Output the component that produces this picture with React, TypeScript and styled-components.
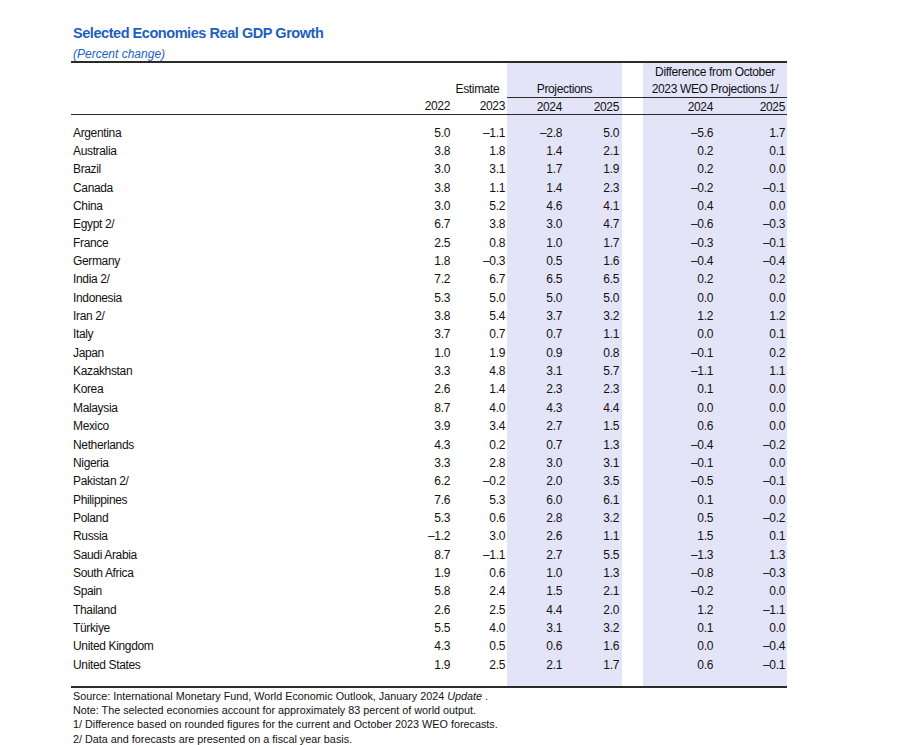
import React from "react";
import styled, { createGlobalStyle } from "styled-components";

const Global = createGlobalStyle`
  html, body { margin: 0; padding: 0; background: #ffffff; }
  body { font-family: "Liberation Sans", Arial, sans-serif; color: #000; }
`;

const SHADE = "#e4e4f9";

const Page = styled.div`
  width: 898px;
  height: 745px;
  box-sizing: border-box;
  padding: 24px 0 0 71px;
  overflow: hidden;
`;

const Frame = styled.div`
  width: 716px;
  display: flex;
  flex-direction: column;
`;

const Title = styled.h1`
  margin: 0 0 5px 2px;
  font-family: "Liberation Sans", Arial, sans-serif;
  font-weight: bold;
  font-size: 14.5px;
  letter-spacing: -0.45px;
  line-height: 18px;
  color: #1d5fbf;
`;

const Subtitle = styled.div`
  margin: 0 0 0 2px;
  font-family: "Liberation Sans", Arial, sans-serif;
  font-style: italic;
  font-size: 12px;
  line-height: 14px;
  color: #1d5fbf;
`;

const Table = styled.table`
  width: 716px;
  table-layout: fixed;
  border-collapse: collapse;
  border-top: 2px solid #2a2a2a;
  border-bottom: 2px solid #2a2a2a;
  font-family: "Liberation Sans Narrow", "Arial Narrow", "Liberation Sans", sans-serif;
  font-size: 12px;
  letter-spacing: -0.35px;
  color: #111;
`;

const Col = styled.col<{ $w: number }>`
  width: ${(p) => p.$w}px;
`;

const Row = styled.tr<{ $h: number; $rule?: boolean }>`
  height: ${(p) => p.$h}px;
  ${(p) => (p.$rule ? "border-bottom: 1px solid #2a2a2a;" : "")}
`;

const Cell = styled.td<{ $shade?: boolean; $align?: "left" | "right" | "center"; $pr?: number; $rule?: boolean; $pt?: number }>`
  padding: ${(p) => p.$pt ?? 0}px ${(p) => p.$pr ?? 0}px 0 ${(p) => (p.$align === "left" ? 2 : 0)}px;
  text-align: ${(p) => p.$align ?? "right"};
  background: ${(p) => (p.$shade ? SHADE : "transparent")};
  white-space: nowrap;
  line-height: 14px;
  vertical-align: middle;
  ${(p) => (p.$rule ? "border-bottom: 1px solid #2a2a2a;" : "")}
`;

const Footer = styled.div`
  margin: 1px 0 0 2px;
  font-family: "Liberation Sans", Arial, sans-serif;
  font-size: 10.8px;
  line-height: 14.3px;
  color: #111;
`;

const Em = styled.i`
  font-style: italic;
`;

type R = [string, string, string, string, string, string, string];

const rows: R[] = [
  ["Argentina", "5.0", "–1.1", "–2.8", "5.0", "–5.6", "1.7"],
  ["Australia", "3.8", "1.8", "1.4", "2.1", "0.2", "0.1"],
  ["Brazil", "3.0", "3.1", "1.7", "1.9", "0.2", "0.0"],
  ["Canada", "3.8", "1.1", "1.4", "2.3", "–0.2", "–0.1"],
  ["China", "3.0", "5.2", "4.6", "4.1", "0.4", "0.0"],
  ["Egypt 2/", "6.7", "3.8", "3.0", "4.7", "–0.6", "–0.3"],
  ["France", "2.5", "0.8", "1.0", "1.7", "–0.3", "–0.1"],
  ["Germany", "1.8", "–0.3", "0.5", "1.6", "–0.4", "–0.4"],
  ["India 2/", "7.2", "6.7", "6.5", "6.5", "0.2", "0.2"],
  ["Indonesia", "5.3", "5.0", "5.0", "5.0", "0.0", "0.0"],
  ["Iran 2/", "3.8", "5.4", "3.7", "3.2", "1.2", "1.2"],
  ["Italy", "3.7", "0.7", "0.7", "1.1", "0.0", "0.1"],
  ["Japan", "1.0", "1.9", "0.9", "0.8", "–0.1", "0.2"],
  ["Kazakhstan", "3.3", "4.8", "3.1", "5.7", "–1.1", "1.1"],
  ["Korea", "2.6", "1.4", "2.3", "2.3", "0.1", "0.0"],
  ["Malaysia", "8.7", "4.0", "4.3", "4.4", "0.0", "0.0"],
  ["Mexico", "3.9", "3.4", "2.7", "1.5", "0.6", "0.0"],
  ["Netherlands", "4.3", "0.2", "0.7", "1.3", "–0.4", "–0.2"],
  ["Nigeria", "3.3", "2.8", "3.0", "3.1", "–0.1", "0.0"],
  ["Pakistan 2/", "6.2", "–0.2", "2.0", "3.5", "–0.5", "–0.1"],
  ["Philippines", "7.6", "5.3", "6.0", "6.1", "0.1", "0.0"],
  ["Poland", "5.3", "0.6", "2.8", "3.2", "0.5", "–0.2"],
  ["Russia", "–1.2", "3.0", "2.6", "1.1", "1.5", "0.1"],
  ["Saudi Arabia", "8.7", "–1.1", "2.7", "5.5", "–1.3", "1.3"],
  ["South Africa", "1.9", "0.6", "1.0", "1.3", "–0.8", "–0.3"],
  ["Spain", "5.8", "2.4", "1.5", "2.1", "–0.2", "0.0"],
  ["Thailand", "2.6", "2.5", "4.4", "2.0", "1.2", "–1.1"],
  ["Türkiye", "5.5", "4.0", "3.1", "3.2", "0.1", "0.0"],
  ["United Kingdom", "4.3", "0.5", "0.6", "1.6", "0.0", "–0.4"],
  ["United States", "1.9", "2.5", "2.1", "1.7", "0.6", "–0.1"],
];

const widths = [324, 57, 55, 58, 57, 21, 72, 72];

const Spacer: React.FC<{ h: number }> = ({ h }) => (
  <Row $h={h}>
    <Cell />
    <Cell />
    <Cell />
    <Cell $shade />
    <Cell $shade />
    <Cell />
    <Cell $shade />
    <Cell $shade />
  </Row>
);

export default function App() {
  return (
    <Page>
      <Global />
      <Frame>
        <Title>Selected Economies Real GDP Growth</Title>
        <Subtitle>(Percent change)</Subtitle>
        <Table>
          <colgroup>
            {widths.map((w, i) => (
              <Col key={i} $w={w} />
            ))}
          </colgroup>
          <thead>
            <Row $h={18}>
              <Cell />
              <Cell />
              <Cell />
              <Cell $shade />
              <Cell $shade />
              <Cell />
              <Cell $shade colSpan={2} $align="center">
                Difference from October
              </Cell>
            </Row>
            <Row $h={17.5}>
              <Cell />
              <Cell />
              <Cell $align="center" $pr={4}>
                Estimate
              </Cell>
              <Cell $shade colSpan={2} $align="center" $rule>
                Projections
              </Cell>
              <Cell $rule />
              <Cell $shade colSpan={2} $align="center" $rule>
                2023 WEO Projections 1/
              </Cell>
            </Row>
            <Row $h={17} $rule>
              <Cell />
              <Cell $pr={2} $pt={1}>2022</Cell>
              <Cell $pr={2} $pt={1}>2023</Cell>
              <Cell $shade $pr={3} $pt={1}>2024</Cell>
              <Cell $shade $pr={3} $pt={1}>2025</Cell>
              <Cell />
              <Cell $shade $pr={2} $pt={1}>2024</Cell>
              <Cell $shade $pr={2} $pt={1}>2025</Cell>
            </Row>
          </thead>
          <tbody>
            <Spacer h={9} />
            {rows.map((r) => (
              <Row key={r[0]} $h={18.35}>
                <Cell $align="left">{r[0]}</Cell>
                <Cell $pr={2}>{r[1]}</Cell>
                <Cell $pr={2}>{r[2]}</Cell>
                <Cell $shade $pr={3}>{r[3]}</Cell>
                <Cell $shade $pr={3}>{r[4]}</Cell>
                <Cell />
                <Cell $shade $pr={2}>{r[5]}</Cell>
                <Cell $shade $pr={2}>{r[6]}</Cell>
              </Row>
            ))}
            <Spacer h={13} />
          </tbody>
        </Table>
        <Footer>
          <div>
            Source: International Monetary Fund, World Economic Outlook, January 2024 <Em>Update</Em> .
          </div>
          <div>Note: The selected economies account for approximately 83 percent of world output.</div>
          <div>1/ Difference based on rounded figures for the current and October 2023 WEO forecasts.</div>
          <div>2/ Data and forecasts are presented on a fiscal year basis.</div>
        </Footer>
      </Frame>
    </Page>
  );
}
